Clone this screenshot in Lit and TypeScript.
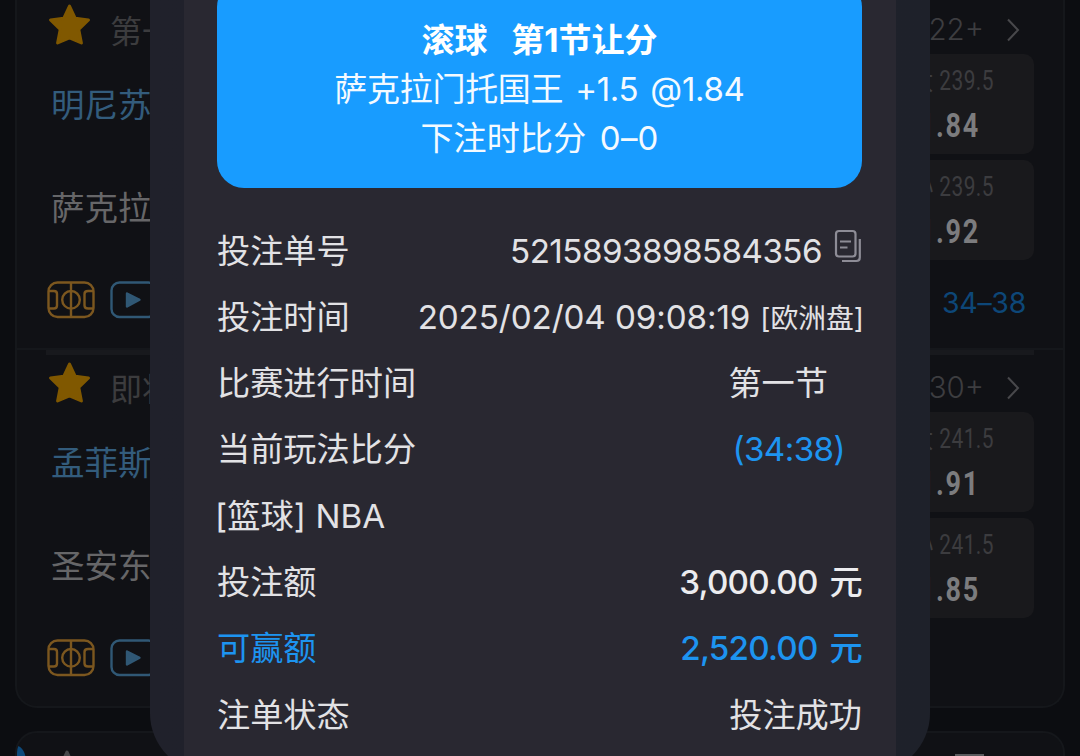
import { LitElement, html, css, svg, nothing } from 'lit';
import { customElement, property } from 'lit/decorators.js';
import { classMap } from 'lit/directives/class-map.js';

interface Odd {
  side: string;
  line: string;
  price: string;
}

interface Match {
  period: string;
  markets: string;
  home: string;
  away: string;
  odds: Odd[];
  score?: string;
}

interface BetRow {
  label: string;
  value?: string;
  kind: string;
  suffix?: string;
}

const MATCHES: Match[] = [
  {
    period: '第一节',
    markets: '122+',
    home: '明尼苏',
    away: '萨克拉',
    odds: [
      { side: '大', line: '239.5', price: '1.84' },
      { side: '小', line: '239.5', price: '1.92' }
    ],
    score: '34–38'
  },
  {
    period: '即将',
    markets: '130+',
    home: '孟菲斯',
    away: '圣安东',
    odds: [
      { side: '大', line: '241.5', price: '1.91' },
      { side: '小', line: '241.5', price: '1.85' }
    ]
  }
];

const ROWS: BetRow[] = [
  { label: '投注单号', value: '5215893898584356', kind: 'order' },
  { label: '投注时间', value: '2025/02/04 09:08:19', kind: 'time', suffix: '[欧洲盘]' },
  { label: '比赛进行时间', value: '第一节', kind: 'period' },
  { label: '当前玩法比分', value: '(34:38)', kind: 'score' },
  { label: '[篮球] NBA', kind: 'league' },
  { label: '投注额', value: '3,000.00 元', kind: 'money' },
  { label: '可赢额', value: '2,520.00 元', kind: 'win' },
  { label: '注单状态', value: '投注成功', kind: 'status' }
];

const starPath = svg`<path d="M21 3 L26.6 15 L39.5 16.6 L30 25.8 L32.6 39 L21 34 L9.4 39 L12 25.8 L2.5 16.6 L15.4 15 Z"
  fill="currentColor" stroke="currentColor" stroke-width="3" stroke-linejoin="round" />`;

@customElement('match-block')
export class MatchBlock extends LitElement {
  @property({ type: Object }) match!: Match;

  static styles = css`
    :host {
      display: block;
      height: 352px;
    }
    .header {
      display: flex;
      align-items: center;
      height: 48px;
      padding: 9px 14px 0 33px;
      color: #3c3c3e;
      font-size: 32px;
      white-space: nowrap;
    }
    .star {
      width: 43px;
      height: 43px;
      margin: -9px 19px 0 0;
      color: #805800;
    }
    .markets {
      margin: -1px 0 0 auto;
      font-size: 29.5px;
      font-weight: 300;
      color: #3d3d40;
    }
    .chevron {
      width: 14px;
      height: 24px;
      margin: 2px 0 0 22px;
    }
    .body {
      display: flex;
      justify-content: space-between;
      height: 206px;
      padding-top: 1px;
    }
    .team {
      height: 103px;
      padding-left: 36px;
      font-size: 33.5px;
      line-height: 102px;
      color: #666668;
      white-space: nowrap;
    }
    .team.home {
      color: #335c7c;
    }
    .odds {
      display: flex;
      flex-direction: column;
      gap: 6px;
      width: 172px;
    }
    .odd {
      display: flex;
      flex-direction: column;
      align-items: center;
      height: 100px;
      border-radius: 10px;
      background: #19191c;
      font-family: Roboto, 'Noto Sans CJK SC', sans-serif;
      white-space: nowrap;
    }
    .line {
      height: 28px;
      margin-top: 13px;
      padding-left: 14px;
      font-size: 27.5px;
      line-height: 28px;
      letter-spacing: 0.6px;
      color: #3c3c3f;
      transform: scaleX(0.76);
    }
    .price {
      height: 34px;
      margin-top: 14px;
      padding-left: 4px;
      font-size: 32.5px;
      font-weight: 700;
      line-height: 34px;
      letter-spacing: 2px;
      color: #7c7c7e;
      transform: scaleX(0.83);
    }
    .footer {
      display: flex;
      align-items: center;
      height: 76px;
      padding: 2px 8px 0 32px;
    }
    .court,
    .play {
      width: 49px;
      height: 38px;
      margin-right: 14px;
    }
    .score {
      margin-left: auto;
      padding-top: 5px;
      font-size: 28.5px;
      letter-spacing: -0.3px;
      color: #0d4778;
    }
  `;

  render() {
    const m = this.match;
    return html`
      <div class="header">
        <svg class="star" viewBox="0 0 42 42">${starPath}</svg>
        <span>${m.period}</span>
        <span class="markets">${m.markets}</span>
        <svg class="chevron" viewBox="0 0 14 24" fill="none" stroke="#48484b" stroke-width="2">
          <path d="M2 1.500 L12 12 L2 22.500" />
        </svg>
      </div>
      <div class="body">
        <div>
          <div class="team home">${m.home}</div>
          <div class="team">${m.away}</div>
        </div>
        <div class="odds">
          ${m.odds.map(
            (o) => html`
              <div class="odd">
                <span class="line">${o.side} ${o.line}</span>
                <span class="price">${o.price}</span>
              </div>
            `
          )}
        </div>
      </div>
      <div class="footer">
        <svg class="court" viewBox="0 0 49 38" fill="none" stroke="#7c571f" stroke-width="2.400">
          <rect x="1.500" y="1.500" width="45" height="34.500" rx="9" />
          <path d="M24 1.500 V36" />
          <circle cx="24" cy="18.800" r="8.800" />
          <path d="M1.500 10 H7 Q10 10 10 13 V24.500 Q10 27.500 7 27.500 H1.500" />
          <path d="M46.500 10 H41 Q37.500 10 37.500 13 V24.500 Q37.500 27.500 41 27.500 H46.500" />
        </svg>
        <svg class="play" viewBox="0 0 49 38" fill="none" stroke="#305875" stroke-width="2.400">
          <rect x="1.500" y="1.500" width="45" height="34.500" rx="8" />
          <path d="M17 12.500 L29.500 18.800 L17 25.500 Z" fill="#305875" stroke-linejoin="round" />
        </svg>
        ${m.score ? html`<span class="score">${m.score}</span>` : nothing}
      </div>
    `;
  }
}

@customElement('bet-detail')
export class BetDetail extends LitElement {
  @property({ type: Array }) rows: BetRow[] = [];

  static styles = css`
    :host {
      display: block;
      box-sizing: border-box;
      padding: 0 34px;
      border-radius: 0 0 60px 60px;
      background: linear-gradient(90deg, #20212b, #1e212a);
      overflow: hidden;
    }
    .panel {
      height: 100%;
      padding: 0 34px 0 33px;
      background: #292831;
    }
    .ticket {
      box-sizing: border-box;
      height: 208px;
      margin-bottom: 29.4px;
      padding-top: 36px;
      border-radius: 27px;
      background: #189cff;
      color: #f4faff;
      font-size: 33px;
      line-height: 49px;
      text-align: center;
    }
    .title {
      font-weight: 700;
      color: #fff;
      white-space: pre;
      word-spacing: 4px;
    }
    .pick {
      letter-spacing: -0.3px;
      word-spacing: 3px;
    }
    .at {
      letter-spacing: 0.2px;
      word-spacing: 4px;
    }
    .row {
      display: flex;
      align-items: center;
      justify-content: space-between;
      height: 66.3px;
      font-size: 33.2px;
      line-height: 48px;
      color: #e2e2e5;
    }
    .value {
      display: flex;
      align-items: center;
    }
    .order .value {
      letter-spacing: -0.55px;
    }
    .copy {
      width: 28px;
      height: 34px;
      margin: -10px 0 0 12px;
    }
    .time .value {
      letter-spacing: -0.1px;
    }
    .suffix {
      margin: 2px -2px 0 10px;
      font-size: 27.8px;
      letter-spacing: 0;
    }
    .period .value {
      padding-right: 34px;
    }
    .score .value {
      padding-right: 17px;
      letter-spacing: -0.6px;
      color: #1d94f0;
    }
    .league .label {
      margin-left: -2px;
      letter-spacing: 0.1px;
    }
    .money .value,
    .win .value {
      font-weight: 500;
      letter-spacing: -0.8px;
      word-spacing: 4px;
    }
    .money .value {
      color: #ececef;
    }
    .win {
      color: #1d94f0;
    }
  `;

  render() {
    return html`
      <div class="panel">
        <div class="ticket">
          <div class="title">滚球  第1节让分</div>
          <div class="pick">萨克拉门托国王 +1.5 @1.84</div>
          <div class="at">下注时比分 0–0</div>
        </div>
        ${this.rows.map((row) => this._renderRow(row))}
      </div>
    `;
  }

  _renderRow(row: BetRow) {
    return html`
      <div class="${classMap({ row: true, [row.kind]: true })}">
        <span class="label">${row.label}</span>
        ${row.value
          ? html`<span class="value"><span>${row.value}</span>${row.suffix
              ? html`<span class="suffix">${row.suffix}</span>`
              : nothing}${row.kind === 'order' ? this._copyIcon() : nothing}</span>`
          : nothing}
      </div>
    `;
  }

  _copyIcon() {
    return html`
      <svg class="copy" viewBox="0 0 28 34" fill="none" stroke="#8d8c96" stroke-width="2.200">
        <rect x="2" y="2" width="19.500" height="25.500" rx="3" />
        <path d="M6 12.500 H17 M6 18.500 H13.500" />
        <path d="M25.800 10 V28.500 Q25.800 32 22.300 32 H8" />
      </svg>
    `;
  }
}

@customElement('app-root')
export class AppRoot extends LitElement {
  static styles = css`
    :host {
      display: block;
      position: relative;
      width: 1080px;
      height: 756px;
      overflow: hidden;
      background: #0c0d11;
      font-family: Inter, 'Noto Sans CJK SC', sans-serif;
    }
    .list {
      display: flex;
      flex-direction: column;
      gap: 23px;
      padding: 0 15px;
      margin-top: -4px;
    }
    .card {
      box-sizing: border-box;
      border: 2px solid #15171b;
      border-radius: 22px;
      background: #101115;
      overflow: hidden;
    }
    .matches {
      height: 712px;
      border-top: 0;
      border-radius: 0 0 22px 22px;
    }
    match-block {
      margin: 0 29px 0 -2px;
    }
    .divider {
      border-top: 2px solid #15171b;
    }
    .divider::after {
      content: '';
      display: block;
      height: 5px;
      margin: 0 29px -1px;
      background: #18191d;
    }
    .next {
      display: flex;
      height: 60px;
      padding-top: 13px;
    }
    .ribbon {
      width: 9px;
      height: 40px;
      border-radius: 0 9px 0 0 / 0 16px 0 0;
      background: #0d4a7c;
    }
    .next-star {
      width: 42px;
      height: 42px;
      margin: 3px 0 0 20px;
      color: #46474a;
    }
    .next-bar {
      width: 29px;
      height: 10px;
      margin: 8px 79px 0 auto;
      background: #5a5b5e;
    }
    bet-detail {
      position: absolute;
      top: -20px;
      left: 150px;
      width: 780px;
      height: 793px;
    }
  `;

  render() {
    return html`
      <div class="list">
        <div class="card matches">
          <match-block .match=${MATCHES[0]}></match-block>
          <div class="divider"></div>
          <match-block .match=${MATCHES[1]}></match-block>
        </div>
        <div class="card next">
          <div class="ribbon"></div>
          <svg class="next-star" viewBox="0 0 42 42">${starPath}</svg>
          <div class="next-bar"></div>
        </div>
      </div>
      <bet-detail .rows=${ROWS}></bet-detail>
    `;
  }
}
